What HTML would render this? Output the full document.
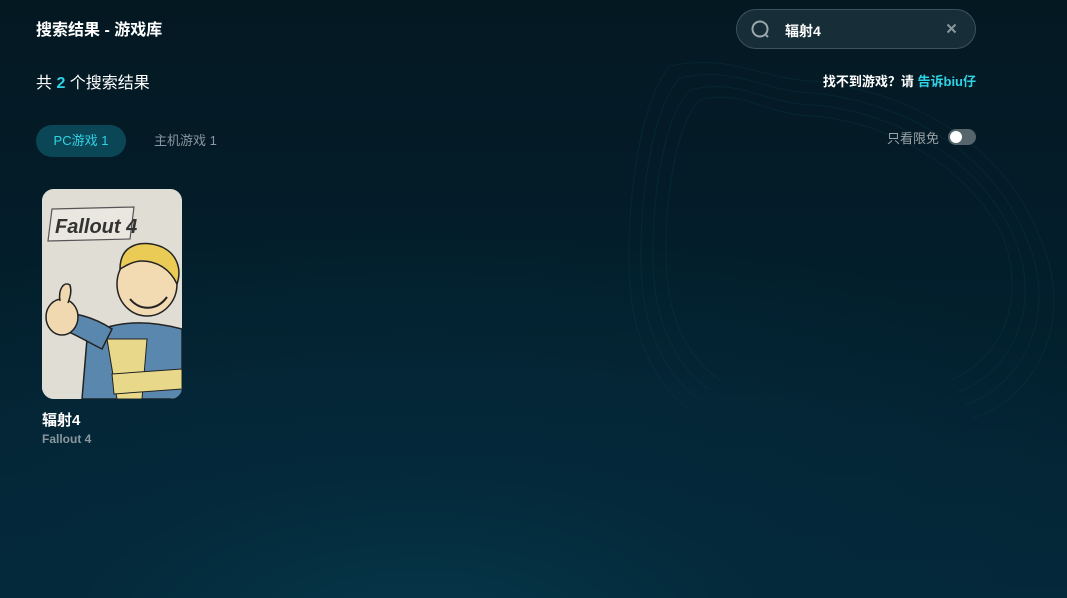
<!DOCTYPE html>
<html><head><meta charset="utf-8"><style>
*{margin:0;padding:0;box-sizing:border-box}
body{width:1067px;height:598px;overflow:hidden;font-family:"Liberation Sans","Noto Sans CJK SC",sans-serif;color:#fff;
background:radial-gradient(ellipse 900px 420px at 420px 640px,#06384a 0%,#04293a 40%,rgba(3,26,38,0) 100%),linear-gradient(180deg,#041822 0%,#03202e 60%,#04293a 100%);position:relative}
.abs{position:absolute}
svg.bg{position:absolute;left:0;top:0}
</style></head><body>
<svg class="bg" width="1067" height="598" viewBox="0 0 1067 598" fill="none" stroke="#0b4150" stroke-width="1" opacity="0.3">
<path d="M700 100 C740 90 760 110 800 115 C880 118 960 160 1000 230 C1030 300 1000 360 950 380"/>
<path d="M690 90 C735 78 760 100 800 104 C890 108 975 155 1012 232 C1045 305 1012 372 958 392"/>
<path d="M680 78 C730 66 760 88 800 92 C900 98 990 150 1025 235 C1060 310 1025 385 965 405"/>
<path d="M670 66 C725 54 760 76 800 80 C910 88 1005 145 1040 238 C1075 315 1040 398 972 418"/>
<path d="M700 100 C680 120 665 180 666 260 C667 320 690 360 720 380"/>
<path d="M690 90 C668 112 652 180 653 262 C654 325 678 368 710 390"/>
<path d="M680 78 C656 104 640 180 641 264 C642 330 666 376 700 400"/>
<path d="M670 66 C644 96 628 180 629 266 C630 335 654 384 690 410"/>
</svg>

<div class="abs" style="left:36px;top:16px;font-size:16px;font-weight:bold">搜索结果 - 游戏库</div>
<div class="abs" style="left:36px;top:69px;font-size:16px">共 <b style="color:#2fd3e6">2</b> 个搜索结果</div>

<div class="abs" style="left:36px;top:125px;width:90px;height:32px;border-radius:16px;background:#0b4656;color:#2fd3e6;font-size:13px;line-height:32px;text-align:center">PC游戏 1</div>
<div class="abs" style="left:154px;top:125px;line-height:32px;font-size:13px;color:#8a979e">主机游戏 1</div>

<div class="abs" style="left:736px;top:9px;width:240px;height:40px;border-radius:20px;background:#172d38;border:1px solid #3b515b"></div>
<svg class="abs" style="left:750px;top:19px" width="22" height="22" viewBox="0 0 22 22" fill="none" stroke="#9aa7ad" stroke-width="2"><circle cx="10" cy="10" r="7.5"/><path d="M16 16l2 2"/></svg>
<div class="abs" style="left:785px;top:21px;font-size:14px;font-weight:bold">辐射4</div>
<svg class="abs" style="left:946px;top:23px" width="11" height="11" viewBox="0 0 11 11" stroke="#8a979e" stroke-width="2"><path d="M1.5 1.5l8 8M9.5 1.5l-8 8"/></svg>

<div class="abs" style="left:776px;top:71px;font-size:13px;width:200px;text-align:right;font-weight:bold">找不到游戏？请 <span style="color:#2fd3e6">告诉biu仔</span></div>
<div class="abs" style="left:887px;top:128px;font-size:13px;color:#9aa3a8">只看限免</div>
<div class="abs" style="left:948px;top:129px;width:28px;height:16px;border-radius:8px;background:#56656b"></div>
<div class="abs" style="left:950px;top:131px;width:12px;height:12px;border-radius:6px;background:#fff"></div>

<div class="abs" style="left:42px;top:189px;width:140px;height:210px;border-radius:12px;overflow:hidden;background:#e2e0d8">
<svg width="140" height="210" viewBox="0 0 140 210">
<rect width="140" height="210" fill="#dfddd4"/>
<polygon points="10,20 92,18 88,50 6,52" fill="#e9e7e0" stroke="#555" stroke-width="1.2"/>
<text x="13" y="44" font-family="Liberation Sans" font-weight="bold" font-style="italic" font-size="20" fill="#333">Fallout 4</text>
<path d="M40 210 L45 150 C60 135 95 128 140 140 L140 210Z" fill="#5a87ad" stroke="#222" stroke-width="1.5"/>
<path d="M65 150 L75 210 L100 210 L105 150Z" fill="#e8d98a" stroke="#222" stroke-width="1"/>
<path d="M70 185 L140 180 L140 200 L72 205Z" fill="#e8d98a" stroke="#222" stroke-width="1"/>
<path d="M5 125 C30 120 55 130 70 140 L60 160 C40 150 25 140 10 138Z" fill="#5a87ad" stroke="#222" stroke-width="1.5"/>
<ellipse cx="20" cy="128" rx="16" ry="18" fill="#f0d9b0" stroke="#222" stroke-width="1.5"/>
<path d="M18 112 C16 100 22 92 28 96 C30 103 28 108 26 114" fill="#f0d9b0" stroke="#222" stroke-width="1.5"/>
<ellipse cx="105" cy="95" rx="30" ry="32" fill="#f2dbb3" stroke="#222" stroke-width="1.5"/>
<path d="M78 80 C78 55 100 50 120 58 C135 65 140 80 135 95 C128 80 115 72 100 72 C90 72 82 78 78 80Z" fill="#e9cb55" stroke="#222" stroke-width="1.5"/>
<path d="M88 110 C98 122 115 122 125 108" fill="none" stroke="#222" stroke-width="2"/>
</svg>
</div>
<div class="abs" style="left:42px;top:409px;font-size:15px;font-weight:bold">辐射4</div>
<div class="abs" style="left:42px;top:432px;font-size:12px;color:#8a979e;font-weight:bold">Fallout 4</div>
</body></html>
